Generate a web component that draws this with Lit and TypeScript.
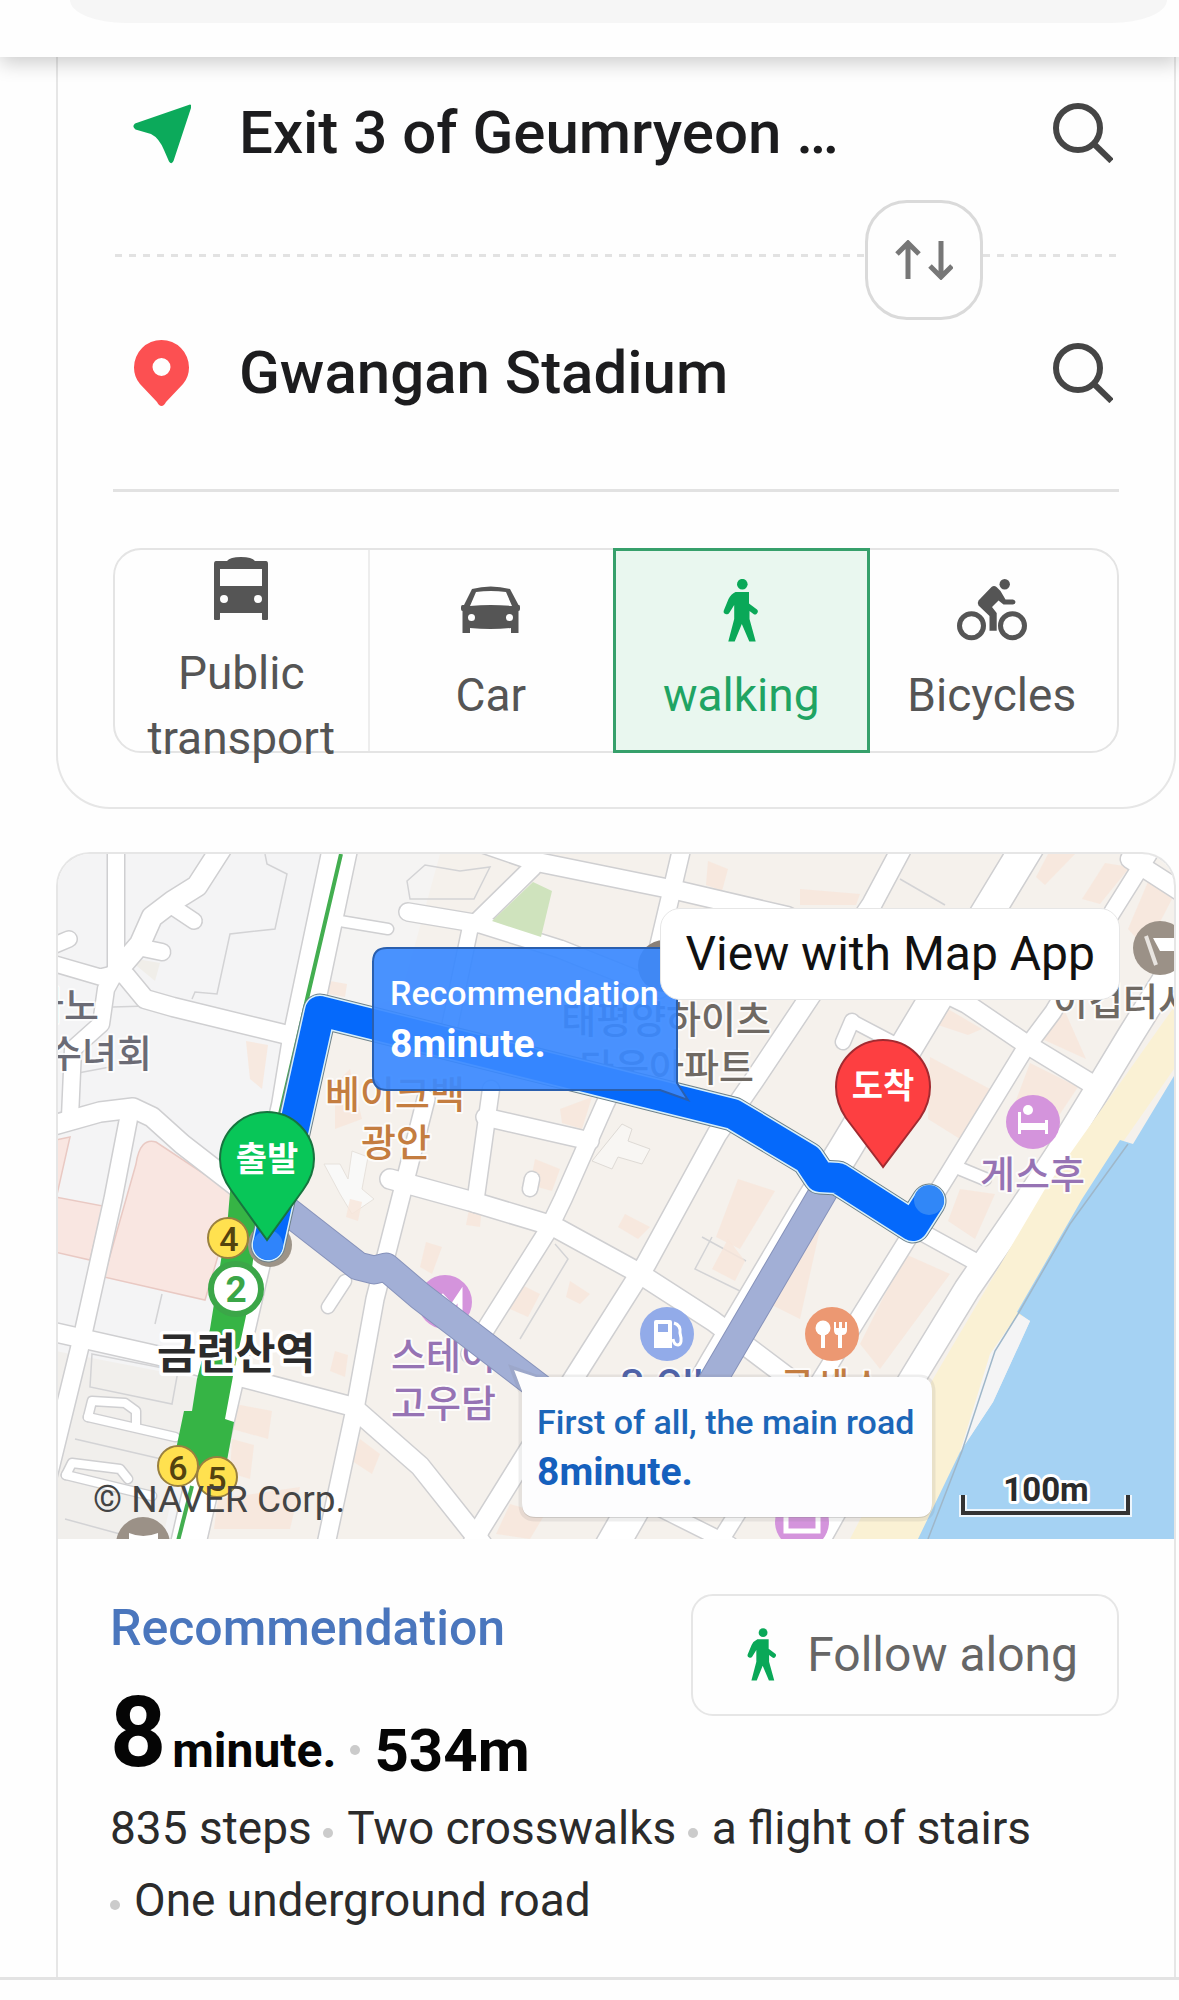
import { LitElement, html, svg, css } from "lit";
import { customElement, property, state } from "lit/decorators.js";

const walker = svg`
  <circle cx="19.3" cy="5.2" r="5.3" />
  <path d="M12.5 13H26V24.5L34 30.5Q36 32.5 33.5 35Q32 36 30.5 35L26.5 32V40L32.7 62.5H26.3L18.8 45L11.7 62.5H5.3L11.2 40V26L6.2 34Q5 36 2.5 35Q0 34 .8 31.5L5.5 20Q8 15 12.5 13Z" />
`;

const modeIcons: Record<string, { width: number; art: unknown }> = {
  bus: {
    width: 54,
    art: svg`<path fill-rule="evenodd" d="M2 4H13Q16 0 27 0T41 4H52Q54 4 54 7V62Q54 63 53 63H49Q48 63 48 62V56H6V62Q6 63 5 63H1Q0 63 0 62V7Q0 4 2 4ZM6 12V29H48V12ZM10 38A4 4 0 1 0 10 46A4 4 0 1 0 10 38ZM44 38A4 4 0 1 0 44 46A4 4 0 1 0 44 38Z" />`,
  },
  car: {
    width: 59,
    art: svg`<path fill-rule="evenodd" d="M11 32Q29.500 27 49 32L57.500 48H58Q59 48 59 50V52Q59 54 57.500 54V76H50V71Q29.500 73 9 71V76H1.500V54Q0 54 0 52V50Q0 48 1.500 48H3ZM15 35L9 49Q29.500 47 51 49L45 35Q29.500 33 15 35ZM10.500 57A3.500 3.500 0 1 0 10.500 64A3.500 3.500 0 1 0 10.500 57ZM48.500 57A3.500 3.500 0 1 0 48.500 64A3.500 3.500 0 1 0 48.500 57Z" transform="translate(0 -22)" />`,
  },
  walk: { width: 36, art: walker },
  bike: {
    width: 70,
    art: svg`
      <circle cx="14.500" cy="46.700" r="12" fill="none" stroke="currentColor" stroke-width="5" />
      <circle cx="55.500" cy="46.700" r="12" fill="none" stroke="currentColor" stroke-width="5" />
      <circle cx="47.700" cy="5.200" r="5.200" />
      <path d="M34.500 8Q37 6 39.500 8L43.500 12L48.500 20.500H56Q58.500 21 58.500 23T56 25.500H46.500L41.500 21.500L35 28L39.700 34V51.700H32.500V37L21.500 26.500Q20 24 21.500 21.500Z" />`,
  },
};

const modes = [
  { id: "bus", label: "Public transport" },
  { id: "car", label: "Car" },
  { id: "walk", label: "walking" },
  { id: "bike", label: "Bicycles" },
];

/* Streets as [polyline points, width]. */
const streets: [string, number][] = [
  ["342,840 300,1040 289,1107 187,1550", 34],
  ["116,840 116,972 106,990 101,1025 73,1050 70,1118", 16],
  ["224,845 197,887 173,902 152,918 140,945 117,972", 20],
  ["170,906 194,922", 15],
  ["138,948 162,953", 16],
  ["117,972 126,977 145,1000 173,1008 292,1037", 18],
  ["45,962 100,978 117,974", 15],
  ["50,948 69,940", 15],
  ["50,1127 100,1113 133,1109 152,1118 182,1145 240,1190", 19],
  ["130,1112 113,1200 83,1335 45,1490", 17],
  ["45,1331 160,1357 240,1378 350,1407", 18],
  ["426,1100 403,1190 375,1300 355,1410 325,1550", 17],
  ["355,1410 420,1467 482,1545", 19],
  ["491,1090 475,1205", 16],
  ["615,1085 605,1105 563,1200 547,1233 470,1355", 17],
  ["904,845 872,905 805,1005 755,1080 717,1135 646,1265 570,1385 480,1530 465,1560", 19],
  ["1029,845 932,1005 845,1150 805,1215 716,1365 610,1550", 32],
  ["1155,845 1113,912 1053,1013 1023,1053 947,1177 858,1320 790,1430 715,1550", 16],
  ["1200,925 1130,1037 1098,1090 1057,1157 1022,1210 967,1290 915,1375 840,1500 812,1550", 25],
  ["470,840 537,863 680,892 787,917 967,1005 1023,1043 1092,1085", 18],
  ["533,868 478,922", 17],
  ["408,913 480,925 560,950 660,990", 17],
  ["470,930 447,1040", 15],
  ["684,840 658,950", 17],
  ["485,1118 590,1142", 17],
  ["390,1180 470,1202 553,1227 637,1273 713,1322 790,1380", 19],
  ["925,1235 985,1268", 16],
  ["340,922 388,930", 10],
  ["345,1282 328,1308", 12],
  ["852,1022 843,1043", 14],
  ["852,1022 892,1043", 12],
  ["1130,860 1200,905", 18],
  ["530,1190 532,1180", 14],
  ["956,1168 985,1180", 12],
  ["88,1418 175,1438", 8],
  ["88,1418 92,1402 125,1404 136,1412 136,1428", 8],
  ["66,1476 152,1497", 8],
  ["66,1476 72,1464 120,1470 128,1480", 8],
  ["640,1500 730,1545", 14],
];

/* Building footprints. */
const blocks = [
  "330,982 347,985 345,998 328,995",
  "246,1042 268,1046 262,1090 250,1080",
  "335,1085 350,1070 362,1120 335,1130",
  "708,862 728,870 722,892 706,886",
  "800,890 860,895 856,906 800,906",
  "1048,855 1075,855 1045,886 1036,878",
  "1105,864 1130,868 1100,905 1082,900",
  "1150,878 1172,888 1172,900 1146,950 1128,930",
  "948,1010 982,1030 968,1036 938,1026",
  "1063,1008 1086,1060 1042,1040",
  "930,1058 990,1090 960,1140 928,1120",
  "1030,1064 1078,1088 1040,1145 1006,1128",
  "560,1110 592,1098 582,1130 562,1124",
  "738,1180 775,1192 740,1250 716,1238",
  "728,1240 745,1262 735,1282 712,1270",
  "625,1215 650,1228 638,1240 618,1228",
  "535,1160 560,1170 552,1192 530,1186",
  "470,1205 482,1208 480,1228 466,1226",
  "426,1243 442,1248 432,1275 420,1268",
  "520,1285 540,1295 528,1318 510,1310",
  "570,1282 590,1295 580,1305 566,1298",
  "775,1260 820,1230 800,1320 760,1300",
  "905,1255 950,1275 880,1370 860,1345",
  "235,1405 272,1412 268,1440 232,1430",
  "232,1440 254,1446 250,1480 230,1474",
  "218,1500 300,1488 290,1530 214,1530",
  "360,1440 380,1455 372,1475 352,1462",
  "510,1505 545,1515 530,1540 496,1535",
  "350,1200 362,1203 358,1222 346,1218",
  "335,1352 348,1356 345,1378 330,1372",
  "960,1190 995,1195 975,1240 948,1222",
];

@customElement("mode-tabs")
export class ModeTabs extends LitElement {
  @property() selected = "walk";

  static styles = css`
    :host {
      display: block;
    }
    .tabs {
      display: grid;
      grid-template-columns: repeat(4, minmax(0, 1fr));
      grid-template-rows: 201px;
      border: 2px solid #e4e4e4;
      border-radius: 28px;
    }
    .tab {
      display: flex;
      flex-direction: column;
      align-items: center;
      gap: 20px;
      box-sizing: border-box;
      min-width: 0;
      margin: 0;
      padding: 29px 0 0;
      border: 0;
      background: none;
      color: #555;
      font: 400 46px/65px Roboto, sans-serif;
    }
    .tab.long {
      margin-right: -4px;
      padding-top: 7px;
      border-right: 2px solid #ededed;
    }
    .tab.on {
      margin: -2px -3px;
      padding-top: 28px;
      border: 3px solid #36a06b;
      background: #e9f7ef;
      color: #1fa463;
    }
    .icon {
      display: block;
      height: 64px;
      flex: none;
      fill: currentColor;
    }
    .on .icon {
      fill: #0aa858;
    }
  `;

  render() {
    return html`
      <div class="tabs">
        ${modes.map((m) => {
          const icon = modeIcons[m.id];
          return html`
            <button
              type="button"
              class="tab ${m.id === "bus" ? "long" : ""} ${m.id === this.selected ? "on" : ""}"
              aria-pressed=${m.id === this.selected}
              @click=${() => this.dispatchEvent(new CustomEvent("mode", { detail: m.id }))}
            >
              <svg class="icon" width=${icon.width} viewBox="0 0 ${icon.width} 64" aria-hidden="true">${icon.art}</svg>
              <span>${m.label}</span>
            </button>
          `;
        })}
      </div>
    `;
  }
}

@customElement("route-map")
export class RouteMap extends LitElement {
  static styles = css`
    :host {
      display: block;
      position: relative;
      overflow: hidden;
    }
    .canvas {
      display: block;
      width: 100%;
      height: auto;
      font-family: Roboto, "Noto Sans CJK KR", sans-serif;
    }
    .casing {
      fill: none;
      stroke: #cfcfd1;
      stroke-linecap: round;
      stroke-linejoin: round;
    }
    .street {
      fill: none;
      stroke: #fff;
      stroke-linecap: round;
      stroke-linejoin: round;
    }
    .route {
      fill: none;
      stroke-linecap: round;
      stroke-linejoin: round;
    }
    .place {
      font-size: 38px;
      font-weight: 500;
      paint-order: stroke;
      stroke: #fff;
      stroke-width: 4px;
      stroke-opacity: 0.8;
      stroke-linejoin: round;
    }
    .brown {
      fill: #c47d40;
    }
    .grey {
      fill: #6f6963;
    }
    .slate {
      fill: #6b6b75;
    }
    .violet {
      fill: #9673b4;
    }
    .indigo {
      fill: #4f62a8;
    }
    .station {
      font-size: 43px;
      font-weight: 700;
      fill: #2b2b2b;
      stroke-width: 7px;
      stroke-opacity: 1;
    }
    .pin-text {
      font-size: 34px;
      font-weight: 700;
      fill: #fff;
      text-anchor: middle;
    }
    .exit {
      fill: #ffe14f;
      stroke: #99803f;
      stroke-width: 2;
    }
    .exit-no {
      font-size: 34px;
      font-weight: 500;
      fill: #54430f;
      text-anchor: middle;
    }
    .name {
      font-size: 34px;
      font-weight: 500;
    }
    .time {
      font-size: 39px;
      font-weight: 700;
    }
    .open {
      position: absolute;
      top: 54px;
      right: 54px;
      padding: 16px 24px;
      border: 1px solid #e6e6e6;
      border-radius: 20px;
      background: #fff;
      color: #111;
      font: 400 48px/58px Roboto, sans-serif;
      text-decoration: none;
      white-space: nowrap;
    }
  `;

  render() {
    return html`
      <svg class="canvas" viewBox="58 855 1116 685" role="img" aria-label="Walking route map">
        <rect x="58" y="855" width="1116" height="685" fill="#f4f4f5" />
        <path d="M342 855H1174V1540H187L289 1107Z" fill="#f5f1ec" />
        <path d="M342 855H440L400 1000L310 1020Z" fill="#f5f4f3" />
        <path d="M45 1350L200 1380L160 1550H45Z" fill="#f1efec" />
        <path d="M136 1165Q140 1138 156 1143L236 1196L205 1301L104 1278Z" fill="#f9e6e1" stroke="#e9c9c3" stroke-width="1.500" />
        <path d="M50 1142L70 1138L56 1200ZM50 1197L103 1207L90 1261L50 1252Z" fill="#f9e6e1" stroke="#e9c9c3" stroke-width="1.500" />
        <g fill="none" stroke="#d3d3d5" stroke-width="1.500">
          <path d="M265 855L267 865L287 875L275 930L230 935L217 995L195 993L192 1000" />
          <path d="M113 1008L180 1006M78 1074L110 1068M162 1295L155 1325M92 1355L178 1372L172 1405L90 1388ZM75 1440L170 1462M65 1520L120 1535" />
          <path d="M410 900L407 882L425 866L460 872L490 868L474 900ZM702 1238L746 1262M712 1238L695 1270L740 1292M555 1245L568 1260L520 1340" />
          <path d="M900 880L945 906" />
        </g>
        <path d="M126 958L160 964L155 982Z" fill="#f0eee9" />
        <path d="M324 1165L340 1165L348 1180L352 1152L368 1158L362 1190L374 1200L352 1215L340 1195Z" fill="#f9f9f8" stroke="#e7e2dc" />
        <path d="M622 1125L632 1130L628 1142L650 1150L642 1165L618 1158L612 1170L592 1162Z" fill="#f8f6f3" stroke="#dedad5" />
        ${blocks.map((p) => svg`<polygon points=${p} fill="#f7e6db" opacity="0.800" />`)}
        ${streets.map(([p, w]) => svg`<polyline class="casing" points=${p} stroke-width=${w + 3} />`)}
        ${streets.map(([p, w]) => svg`<polyline class="street" points=${p} stroke-width=${w} />`)}
        <path d="M533 883L552 892L541 938L492 922Z" fill="#cfe3bd" />
        <path d="M1174 1008L1045 1190L933 1380L850 1540H925L1010 1340L1090 1190L1174 1070Z" fill="#faf1d4" />
        <path d="M1174 1077L1133 1145L1120 1141L1082 1200L1017 1313L1030 1322L993 1403L960 1453L918 1540H1174Z" fill="#a5d2f3" />
        <path d="M1018 1315L1030 1322L993 1403L960 1453L990 1355Z" fill="#f4f4f5" />
        <path d="M1128 1145L1070 1225L1018 1315L995 1352L962 1452L928 1540" fill="none" stroke="#9fb7c9" stroke-width="1.500" />

        <path d="M341 855L307 1000L280 1115" fill="none" stroke="#43ae50" stroke-width="4" />
        <path d="M232 1170L228 1217L210 1330L197 1380L192 1412L184 1412L174 1460L200 1480L226 1467L234 1423L225 1420L233 1377L246 1317L262 1190Z" fill="#36b445" />
        <path d="M192 1487L178 1542" stroke="#43ae50" stroke-width="4" />

        <circle cx="445" cy="1303" r="27" fill="#d494dc" />
        <path d="M441 1296L452 1308L460 1296V1316" fill="none" stroke="#fff" stroke-width="5" />
        <text class="place violet" x="391" y="1370">스테이</text>
        <text class="place violet" x="391" y="1418">고우담</text>
        <text class="place slate" x="99" y="1020" text-anchor="end">나노</text>
        <text class="place slate" x="152" y="1068" text-anchor="end">수녀회</text>
        <text class="place brown" x="325" y="1109">베이크백</text>
        <text class="place brown" x="361" y="1157">광안</text>
        <text class="place grey" x="771" y="1034" text-anchor="end">태평양하이츠</text>
        <text class="place grey" x="754" y="1082" text-anchor="end">타운아파트</text>
        <text class="place grey" x="1053" y="1016">이컵터시</text>
        <text class="place violet" x="980" y="1189">게스후</text>
        <text class="place indigo" x="667" y="1398" text-anchor="middle">S-OIL</text>
        <text class="place brown" x="832" y="1401" text-anchor="middle">금센스</text>

        <circle cx="1160" cy="949" r="27" fill="#9b9187" />
        <path d="M1146 937L1156 966" stroke="#e8e4e0" stroke-width="4" />
        <path d="M1153 939H1180V952H1160Z" fill="#fff" />
        <circle cx="664" cy="967" r="26" fill="#8a8078" />
        <circle cx="1033" cy="1123" r="27" fill="#d494dc" />
        <g fill="#fff">
          <circle cx="1028" cy="1111" r="5" />
          <path d="M1018 1113H1021V1124H1045V1121H1048V1135H1045V1131H1021V1135H1018Z" />
        </g>
        <circle cx="667" cy="1335" r="27" fill="#92abe9" />
        <path fill="#fff" fill-rule="evenodd" d="M654 1323Q654 1321 656 1321H670Q672 1321 672 1323V1349H654ZM658 1325V1333H668V1325Z" />
        <path d="M674 1324Q681 1326 680 1334Q683 1345 678 1346Q674 1346 673 1340" fill="none" stroke="#fff" stroke-width="3" />
        <circle cx="832" cy="1335" r="27" fill="#ec9872" />
        <g fill="#fff">
          <circle cx="823" cy="1329" r="7.500" />
          <path d="M821 1334H825V1349H821ZM834 1323H836V1329H839V1323H842V1329H845V1323H847V1331Q847 1336 842 1336V1349H838V1336Q834 1336 834 1331Z" />
        </g>
        <circle cx="802" cy="1523" r="27" fill="#d494dc" />
        <path d="M786 1516V1532H818V1516" fill="none" stroke="#fff" stroke-width="5" />
        <circle cx="143" cy="1545" r="27" fill="#9b9187" />
        <path d="M129 1534Q143 1540 158 1534V1545H129Z" fill="#fff" />

        <circle cx="270" cy="1246" r="22" fill="#9d9488" />
        <polyline class="route" points="285,1210 358,1267 374,1271 386,1268 420,1297 540,1389" stroke="#8793bb" stroke-width="29" />
        <polyline class="route" points="285,1210 358,1267 374,1271 386,1268 420,1297 540,1389" stroke="#a2afd6" stroke-width="27" />
        <polyline class="route" points="708,1390 825,1190" stroke="#8793bb" stroke-width="29" />
        <polyline class="route" points="708,1390 825,1190" stroke="#a2afd6" stroke-width="27" />
        <polyline class="route" points="268,1246 320,1012 733,1115 808,1160 820,1178 838,1179 913,1227 929,1202" stroke="#6d8089" stroke-width="35" />
        <polyline class="route" points="268,1246 320,1012 733,1115 808,1160 820,1178 838,1179 913,1227 929,1202" stroke="#d8f0fb" stroke-width="33" />
        <polyline class="route" points="268,1246 320,1012 733,1115 808,1160 820,1178 838,1179 913,1227 929,1202" stroke="#0569fb" stroke-width="30" />
        <circle cx="268" cy="1246" r="15" fill="#2f84fb" />
        <circle cx="929" cy="1201" r="15" fill="#3187f7" />

        <circle class="exit" cx="228" cy="1239" r="20" />
        <text class="exit-no" x="229" y="1252">4</text>
        <circle cx="236" cy="1290" r="25" fill="#fff" stroke="#3ba648" stroke-width="6" />
        <text x="236" y="1303" font-size="37" font-weight="700" fill="#3ba648" text-anchor="middle">2</text>
        <text class="place station" x="157" y="1370">금련산역</text>
        <circle class="exit" cx="217" cy="1478" r="20" />
        <text class="exit-no" x="217" y="1492">5</text>
        <circle class="exit" cx="178" cy="1467" r="20" />
        <text class="exit-no" x="178" y="1481">6</text>

        <path d="M267 1241L231 1191Q220 1176 220 1160A47 47 0 0 1 314 1160Q314 1176 303 1191Z" fill="#08c658" stroke="#17743f" stroke-width="2" />
        <text class="pin-text" x="267" y="1172">출발</text>
        <path d="M883 1168L846 1119Q836 1104 836 1088A47 47 0 0 1 930 1088Q930 1104 920 1119Z" fill="#fd3f41" stroke="#a12a30" stroke-width="2" />
        <text class="pin-text" x="883" y="1099">도착</text>

        <path d="M387 949H663Q677 949 677 963V1084L688 1101L660 1091H387Q373 1091 373 1077V963Q373 949 387 949Z" fill="#3a89ff" fill-opacity="0.920" stroke="#2a5fae" stroke-width="2" />
        <text class="name" x="390" y="1006" fill="#fff">Recommendation</text>
        <text class="time" x="390" y="1058" fill="#fff">8minute.</text>

        <path d="M514 1371L536 1379H918Q932 1379 932 1393V1505Q932 1519 918 1519H536Q522 1519 522 1505V1393Z" fill="#7a7a7a" fill-opacity="0.250" stroke="#777" stroke-opacity="0.120" stroke-width="7" />
        <path d="M514 1371L536 1378H918Q932 1378 932 1392V1504Q932 1518 918 1518H536Q522 1518 522 1504V1392Z" fill="#fdfdfe" />
        <text class="name" x="537" y="1435" fill="#1c66b8">First of all, the main road</text>
        <text class="time" x="537" y="1486" fill="#1560bd">8minute.</text>

        <text x="93" y="1513" font-size="37" fill="#444">© NAVER Corp.</text>
        <path d="M963 1496V1514H1128V1496" fill="none" stroke="#fff" stroke-opacity="0.800" stroke-width="8" />
        <path d="M963 1496V1514H1128V1496" fill="none" stroke="#333" stroke-width="4" />
        <text x="1046" y="1502" font-size="33" font-weight="700" fill="#2b2b2b" stroke="#fff" stroke-width="6" stroke-linejoin="round" paint-order="stroke" text-anchor="middle">100m</text>
      </svg>
      <a class="open" href="#map">View with Map App</a>
    `;
  }
}

@customElement("app-root")
export class AppRoot extends LitElement {
  @state() private mode = "walk";
  @state() private places = ["Exit 3 of Geumryeon …", "Gwangan Stadium"];

  static styles = css`
    :host {
      display: block;
      min-height: 100vh;
      background: #fefefe;
      color: #1c1c1e;
      font-family: Roboto, "Noto Sans CJK KR", sans-serif;
    }
    button {
      margin: 0;
      padding: 0;
      border: 0;
      background: none;
      color: inherit;
      font-family: inherit;
    }
    .bar {
      position: relative;
      height: 57px;
      padding: 0 12px 0 70px;
      background: #fefefe;
      box-shadow: 0 6px 20px rgba(0, 0, 0, 0.2);
    }
    .pill {
      height: 23px;
      border-radius: 0 0 56px 56px / 0 0 23px 23px;
      background: #f6f6f6;
    }
    .page {
      margin: 0 3px 0 56px;
    }
    .planner {
      padding: 40px 55px 54px;
      border: 2px solid #e6e6e6;
      border-top: 0;
      border-radius: 0 0 54px 54px;
    }
    .row {
      display: flex;
      align-items: center;
      gap: 48px;
      padding: 0 6px 0 20px;
    }
    .mark {
      display: block;
      width: 58px;
      height: 68px;
      flex: none;
    }
    .place {
      flex: 1;
      min-width: 0;
      overflow: hidden;
      text-align: left;
      text-overflow: ellipsis;
      white-space: nowrap;
      font-size: 60px;
      font-weight: 500;
      line-height: 72px;
    }
    .glass {
      display: block;
      width: 60px;
      height: 60px;
      fill: none;
      stroke: #454545;
      stroke-width: 6;
    }
    .between {
      position: relative;
      margin: 85px 0 80px;
    }
    .dashes {
      display: block;
      width: 100%;
      height: 3px;
    }
    .swap {
      position: absolute;
      top: -54px;
      right: 136px;
      display: grid;
      place-items: center;
      width: 118px;
      height: 120px;
      border: 3px solid #dadada;
      border-radius: 42px;
      background: #fefefe;
    }
    .arrows {
      width: 58px;
      height: 40px;
      fill: none;
      stroke: #777;
      stroke-width: 5;
    }
    .rule {
      height: 3px;
      margin: 80px 0 56px;
      border: 0;
      background: #e2e2e2;
    }
    .result {
      margin-top: 43px;
      border: 2px solid #e6e6e6;
      border-bottom: 0;
      border-radius: 34px 34px 0 0;
      overflow: hidden;
    }
    .summary {
      padding: 55px 55px 41px 52px;
    }
    .top {
      display: flex;
      align-items: flex-start;
      justify-content: space-between;
    }
    .title {
      margin: 4px 0 25px;
      color: #4a76bd;
      font-size: 50px;
      font-weight: 500;
      line-height: 60px;
    }
    .figures {
      display: flex;
      align-items: flex-end;
      gap: 6px;
      margin-bottom: 9px;
      color: #050505;
      font-weight: 700;
    }
    .big {
      font-size: 98px;
      line-height: 100px;
    }
    .unit {
      font-size: 48px;
      line-height: 64px;
    }
    .distance {
      font-size: 60px;
      line-height: 64px;
    }
    .dot {
      display: inline-block;
      width: 10px;
      height: 10px;
      margin-right: 14px;
      border-radius: 50%;
      background: #cbcbcb;
      vertical-align: 6px;
    }
    .figures .dot {
      margin: 0 8px 28px;
    }
    .follow {
      display: flex;
      align-items: center;
      gap: 30px;
      padding: 30px 39px 30px 54px;
      border: 2px solid #e6e6e6;
      border-radius: 22px;
      color: #666;
      font-size: 48px;
      line-height: 58px;
    }
    .walker {
      width: 30px;
      height: 54px;
      fill: #0aa858;
    }
    .facts {
      margin: 0;
      font-size: 46px;
      line-height: 72px;
      color: #2b2b2b;
    }
    .fact {
      white-space: nowrap;
    }
    .end {
      height: 3px;
      margin: 0;
      border: 0;
      background: #e3e3e3;
    }
  `;

  private glass() {
    return html`
      <svg class="glass" viewBox="0 0 60 60" aria-hidden="true">
        <circle cx="25" cy="25" r="22" />
        <path d="M41 41L58.500 58" />
      </svg>
    `;
  }

  render() {
    return html`
      <header class="bar"><div class="pill"></div></header>
      <main>
        <div class="page">
          <section class="planner">
            <div class="row">
              <svg class="mark" viewBox="0 -5 58 68" aria-hidden="true">
                <path d="M57 .5Q59 1 58 4L40.500 57Q38.500 61 36 57.500L31 46Q26 34 18 30L2.500 25.500Q-1.500 22.500 2 19.500Z" fill="#0caa5b" />
              </svg>
              <button type="button" class="place">${this.places[0]}</button>
              <button type="button" aria-label="Search start">${this.glass()}</button>
            </div>
            <div class="between">
              <svg class="dashes" aria-hidden="true">
                <line x1="2" y1="1.500" x2="100%" y2="1.500" stroke="#e2e2e2" stroke-width="3" stroke-dasharray="7 7" />
              </svg>
              <button type="button" class="swap" aria-label="Swap" @click=${() => (this.places = [...this.places].reverse())}>
                <svg class="arrows" viewBox="0 0 58 40" aria-hidden="true">
                  <path d="M13 39V3M2 14L13 3L24 14M46 1V37M35 26L46 37L57 26" />
                </svg>
              </button>
            </div>
            <div class="row">
              <svg class="mark" viewBox="-1 -1 58 68" aria-hidden="true">
                <path fill-rule="evenodd" d="M27.500 66Q25 66 23 62L6 44Q0 37 0 27.500A27.500 27.500 0 0 1 55 27.500Q55 37 49 44L32 62Q30 66 27.500 66ZM27.500 18A9 9 0 1 0 27.500 36A9 9 0 1 0 27.500 18Z" fill="#fc5052" />
              </svg>
              <button type="button" class="place">${this.places[1]}</button>
              <button type="button" aria-label="Search destination">${this.glass()}</button>
            </div>
            <hr class="rule" />
            <mode-tabs .selected=${this.mode} @mode=${(e: CustomEvent) => (this.mode = e.detail)}></mode-tabs>
          </section>

          <section class="result">
            <route-map></route-map>
            <div class="summary">
              <div class="top">
                <div>
                  <h2 class="title">Recommendation</h2>
                  <div class="figures">
                    <span class="big">8</span><span class="unit">minute.</span><i class="dot"></i><span class="distance">534m</span>
                  </div>
                </div>
                <button type="button" class="follow">
                  <svg class="walker" viewBox="0 0 36 64" aria-hidden="true">${walker}</svg>
                  Follow along
                </button>
              </div>
              <p class="facts">
                <span class="fact">835 steps</span>
                <span class="fact"><i class="dot"></i>Two crosswalks</span>
                <span class="fact"><i class="dot"></i>a flight of stairs</span>
                <span class="fact"><i class="dot"></i>One underground road</span>
              </p>
            </div>
          </section>
        </div>
        <hr class="end" />
      </main>
    `;
  }
}
